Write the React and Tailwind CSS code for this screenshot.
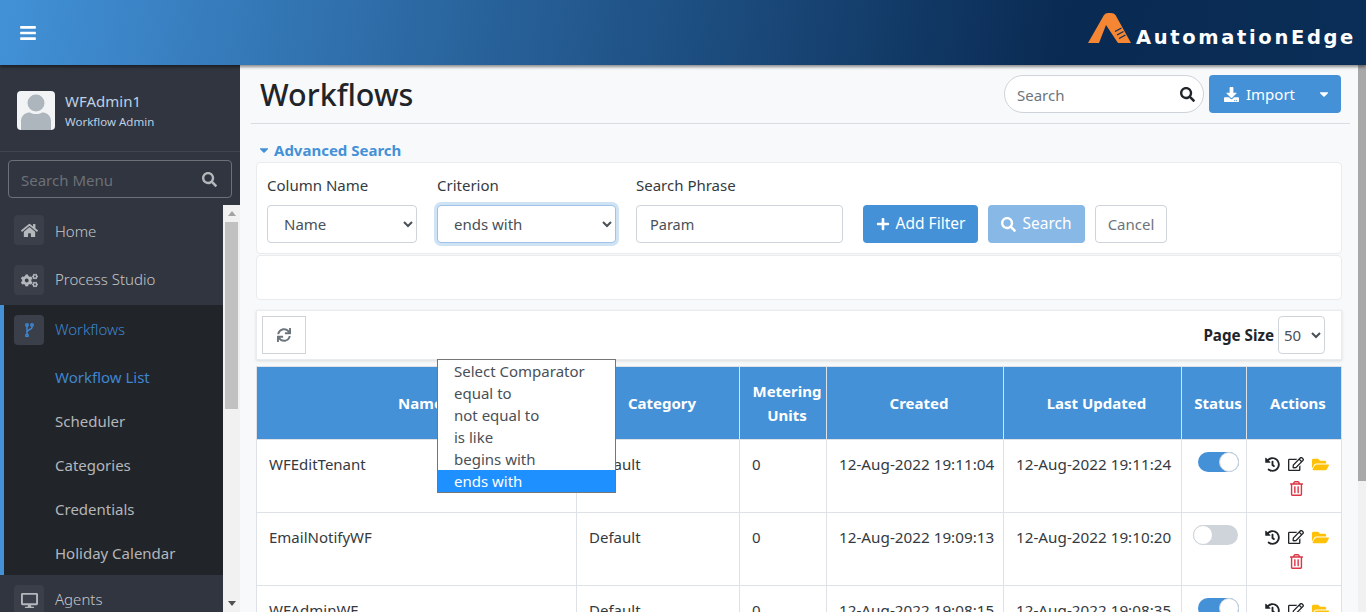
import React from "react";
import {
  FaBars,
  FaCaretDown,
  FaCogs,
  FaDesktop,
  FaDownload,
  FaFolderOpen,
  FaHistory,
  FaHome,
  FaPlus,
  FaRegEdit,
  FaRegTrashAlt,
  FaSearch,
  FaSync,
} from "react-icons/fa";

const subItems = ["Workflow List", "Scheduler", "Categories", "Credentials", "Holiday Calendar"];

const rows = [
  { name: "WFEditTenant", created: "12-Aug-2022 19:11:04", updated: "12-Aug-2022 19:11:24", on: true },
  { name: "EmailNotifyWF", created: "12-Aug-2022 19:09:13", updated: "12-Aug-2022 19:10:20", on: false },
  { name: "WFAdminWF", created: "12-Aug-2022 19:08:15", updated: "12-Aug-2022 19:08:35", on: true },
];

const comparators = ["Select Comparator", "equal to", "not equal to", "is like", "begins with", "ends with"];

const BranchIcon = () => (
  <svg width="9" height="14" viewBox="0 0 9 14" fill="none" stroke="#3f86cf" strokeWidth="1.500">
    <path d="M2 3V12" />
    <path d="M7 3V4.500C7 6.500 2 6.500 2 9" />
    <circle cx="2" cy="2" r="1.200" />
    <circle cx="7" cy="2" r="1.200" />
    <circle cx="2" cy="12.500" r="1.200" />
  </svg>
);

const NavItem = ({ icon: Icon, label, active, labelClass = "pb-[2px]" }) => (
  <div className={`flex h-[50px] items-center gap-[11px] ${active ? "pl-[10px]" : "pl-[14px]"}`}>
    <span className="flex h-[30px] w-[30px] items-center justify-center rounded bg-[#3a3f4a]">
      {active ? <BranchIcon /> : <Icon className="text-[17px] text-[#b4b7bb]" />}
    </span>
    <span className={`${labelClass} text-[15px] font-light ${active ? "text-[#3f86cf]" : "text-[#c4c6c9]"}`}>{label}</span>
  </div>
);

const Sidebar = () => (
  <aside className="flex w-[240px] shrink-0 flex-col bg-[#31353f]">
    <div className="flex h-[87px] items-center gap-[10px] border-b border-[#3f444f] pl-[17px] pt-[5px]">
      <div className="flex h-[39px] w-[38px] items-end justify-center overflow-hidden rounded bg-[#f2f3f4]">
        <svg width="32" height="36" viewBox="0 0 32 36">
          <circle cx="16" cy="9" r="8.500" fill="#adb5bd" />
          <path d="M1 36V27C1 21 6 18.500 10 18.500C13 20.500 19 20.500 22 18.500C26 18.500 31 21 31 27V36Z" fill="#adb5bd" />
        </svg>
      </div>
      <div>
        <div className="text-[15px] leading-[22px] text-[#bcd0e6]">WFAdmin1</div>
        <div className="text-[11.500px] leading-[20px] text-[#bcd0e6]">Workflow Admin</div>
      </div>
    </div>
    <div className="px-2 pt-2">
      <div className="flex h-[38px] items-center justify-between rounded border border-[#6c7077] pl-3 pr-[14px]">
        <span className="pt-[2px] text-[15px] text-[#6c7077]">Search Menu</span>
        <FaSearch className="text-[15px] text-[#b4b7bb]" />
      </div>
    </div>
    <div className="mt-[7px] flex min-h-0 flex-1">
      <nav className="w-[223px] overflow-hidden">
        <NavItem icon={FaHome} label="Home" labelClass="pt-[2px]" />
        <NavItem icon={FaCogs} label="Process Studio" />
        <div className="border-l-4 border-[#4491d7] bg-[#212428]">
          <NavItem label="Workflows" active />
          {subItems.map((item, i) => (
            <div
              key={item}
              className={`flex h-[44px] items-center pl-[51px] text-[15px] ${i === 0 ? "text-[#3f86cf]" : "text-[#b4b7bb]"}`}
            >
              {item}
            </div>
          ))}
        </div>
        <NavItem icon={FaDesktop} label="Agents" />
      </nav>
      <div className="flex w-[17px] flex-col items-center bg-[#f1f1f1]">
        <div className="flex h-[17px] items-center justify-center">
          <div className="h-0 w-0 border-x-[4px] border-b-[5px] border-x-transparent border-b-[#a3a3a3]" />
        </div>
        <div className="h-[187px] w-[13px] bg-[#c1c1c1]" />
        <div className="mt-auto flex h-[17px] items-center justify-center">
          <div className="h-0 w-0 border-x-[4px] border-t-[5px] border-x-transparent border-t-[#505050]" />
        </div>
      </div>
    </div>
  </aside>
);

const Toggle = ({ on }) =>
  on ? (
    <div className="ml-[16px] flex h-[20px] w-[41px] justify-end rounded-full bg-[#4491d7]">
      <div className="h-[20px] w-[20px] rounded-full border border-[#ced4da] bg-white" />
    </div>
  ) : (
    <div className="ml-[11px] flex h-[20px] w-[45px] rounded-full bg-[#ced4da]">
      <div className="h-[20px] w-[20px] rounded-full border border-[#ced4da] bg-white" />
    </div>
  );

const WorkflowTable = () => (
  <table className="w-full table-fixed border-collapse text-[15px] text-[#343a40]">
    <colgroup>
      <col className="w-[320px]" />
      <col className="w-[163px]" />
      <col className="w-[87px]" />
      <col className="w-[177px]" />
      <col className="w-[178px]" />
      <col className="w-[65px]" />
      <col />
    </colgroup>
    <thead>
      <tr className="h-[73px] bg-[#4491d7] text-center text-white">
        {["Name", "Category", "Metering Units", "Created", "Last Updated", "Status", "Actions"].map((h) => (
          <th key={h} className="border border-[#dee2e6] pl-2 font-bold leading-6">
            {h}
          </th>
        ))}
      </tr>
    </thead>
    <tbody className="bg-white">
      {rows.map((r) => (
        <tr key={r.name} className="h-[73px] align-top">
          <td className="border border-[#dee2e6] px-3 py-3 leading-6">{r.name}</td>
          <td className="border border-[#dee2e6] px-3 py-3 leading-6">Default</td>
          <td className="border border-[#dee2e6] px-3 py-3 leading-6">0</td>
          <td className="whitespace-nowrap border border-[#dee2e6] px-3 py-3 text-[15.250px] leading-6">{r.created}</td>
          <td className="whitespace-nowrap border border-[#dee2e6] px-3 py-3 text-[15.250px] leading-6">{r.updated}</td>
          <td className="border border-[#dee2e6] pt-3">
            <Toggle on={r.on} />
          </td>
          <td className="border border-[#dee2e6] py-3">
            <div className="ml-[13px] flex w-[72px] flex-wrap justify-center">
              <span className="flex h-6 w-6 items-center justify-center">
                <FaHistory className="text-[15px] text-[#212529]" />
              </span>
              <span className="flex h-6 w-6 items-center justify-center">
                <FaRegEdit className="text-[16px] text-[#212529]" />
              </span>
              <span className="flex h-6 w-6 items-center justify-center">
                <FaFolderOpen className="text-[17px] text-[#ffc107]" />
              </span>
              <span className="flex h-6 w-6 items-center justify-center">
                <FaRegTrashAlt className="text-[15px] text-[#dc3545]" />
              </span>
            </div>
          </td>
        </tr>
      ))}
    </tbody>
  </table>
);

const App = () => (
  <div className="flex h-[612px] w-[1366px] flex-col overflow-hidden bg-[#f8f9fb] font-['Noto_Sans','Open_Sans',sans-serif] text-[#343a40]">
    <header className="relative z-10 flex h-[65px] shrink-0 items-center justify-between bg-[linear-gradient(100deg,#4291d7,#092a52_78%,#0a2e57)] pl-[19px] pr-[10px] shadow-[0_2px_3px_rgba(0,0,0,0.45)]">
      <FaBars className="text-[18px] text-white" />
      <div className="flex items-end gap-[4px] pb-[10px]">
        <svg width="44" height="31" viewBox="0 0 44 31">
          <path d="M0 31L16 3Q17.500 1 20 1H23Q26 1 27.500 3L43 31H30L18 13L11 31Z" fill="#f58634" />
          <path d="M27 19.500L33.500 16M29 23L35.500 19.500M31 26.500L37.500 23" stroke="#0a2e57" strokeWidth="1.300" />
        </svg>
        <span className="-mb-[7px] font-['DejaVu_Sans',sans-serif] text-[19.500px] font-bold leading-[24px] tracking-[2.650px] text-white">
          AutomationEdge
        </span>
      </div>
    </header>

    <div className="flex min-h-0 flex-1">
      <Sidebar />

      <main className="relative min-w-0 flex-1 overflow-hidden">
        <div className="mx-[8px] ml-[11px] flex h-[59px] items-center justify-between border-b border-[#d9dde2] pl-[9px] pr-[9px]">
          <h1 className="pt-[2px] text-[30.500px] font-medium text-[#212529]">Workflows</h1>
          <div className="flex items-center gap-[5px]">
            <div className="flex h-[38px] w-[200px] items-center justify-between rounded-full border border-[#ced4da] bg-white pl-[12px] pr-[8px]">
              <span className="pt-[2px] text-[15px] text-[#6c757d]">Search</span>
              <FaSearch className="text-[15px] text-[#212529]" />
            </div>
            <button className="flex h-[38px] w-[132px] items-center rounded bg-[#4491d7] pl-[15px] text-[15px] text-white">
              <FaDownload className="mr-[7px] text-[15px]" />
              Import
              <FaCaretDown className="ml-[22px] text-[14px]" />
            </button>
          </div>
        </div>

        <div className="px-[16px]">
          <div className="mt-[16px] flex h-[20px] items-center gap-[3px] pl-[1px] text-[15px] font-bold text-[#4491d7]">
            <FaCaretDown className="text-[14px]" />
            Advanced Search
          </div>

          <div className="mt-[2px] flex h-[92px] items-start rounded-sm border border-[#e9ecef] bg-white pl-[10px] pt-[10px]">
            <div className="w-[170px]">
              <label className="block text-[15px] leading-6">Column Name</label>
              <select className="mt-[8px] h-[38px] w-[150px] rounded border border-[#ced4da] bg-white pl-[12px] text-[15px] text-[#495057]" defaultValue="Name">
                <option>Name</option>
              </select>
            </div>
            <div className="w-[199px]">
              <label className="block text-[15px] leading-6">Criterion</label>
              <select className="mt-[8px] h-[38px] w-[179px] rounded border border-[#9dc3e8] bg-white pl-[12px] text-[15px] text-[#495057] shadow-[0_0_0_3px_rgba(68,145,215,0.25)]" defaultValue="ends with">
                {comparators.map((c) => (
                  <option key={c}>{c}</option>
                ))}
              </select>
            </div>
            <div className="w-[227px]">
              <label className="block text-[15px] leading-6">Search Phrase</label>
              <div className="mt-[8px] flex h-[38px] w-[207px] items-center rounded border border-[#ced4da] bg-white pl-[13px] pt-[2px] text-[14.500px] text-[#495057]">
                Param
              </div>
            </div>
            <div className="mt-[32px] flex gap-[10px]">
              <button className="flex h-[38px] w-[115px] items-center justify-center gap-[6px] rounded bg-[#4491d7] text-[15.500px] text-white">
                <FaPlus className="text-[14px]" />
                Add Filter
              </button>
              <button className="flex h-[38px] w-[97px] items-center justify-center gap-[6px] rounded bg-[#88b8e6] text-[15.500px] text-white">
                <FaSearch className="text-[15px]" />
                Search
              </button>
              <button className="h-[38px] w-[72px] rounded border border-[#ced4da] bg-white text-[15px] text-[#6c757d]">
                Cancel
              </button>
            </div>
          </div>

          <div className="mt-[1px] h-[45px] rounded-sm border border-[#e9ecef] bg-white" />

          <div className="mt-[10px] flex h-[50px] items-center justify-between border border-[#e9ecef] bg-white pl-[5px] pr-[16px] shadow-[0_1px_3px_rgba(0,0,0,0.12)]">
            <button className="flex h-[38px] w-[44px] items-center justify-center border border-[#ced4da]">
              <FaSync className="text-[14px] text-[#6c757d]" />
            </button>
            <div className="flex items-center gap-[4px]">
              <span className="text-[15.200px] font-bold text-[#212529]">Page Size</span>
              <select className="h-[38px] w-[47px] rounded border border-[#ced4da] bg-white pl-[1px] text-[15px] text-[#495057]" defaultValue="50">
                <option>50</option>
              </select>
            </div>
          </div>

          <div className="mt-[6px]">
            <WorkflowTable />
          </div>
        </div>

        {/* open list of the Criterion select */}
        <ul className="absolute left-[197px] top-[294px] w-[179px] border border-[#767676] bg-white text-[15px] leading-[22px] text-[#495057]">
          {comparators.map((c) => (
            <li key={c} className={`pl-[16px] ${c === "ends with" ? "bg-[#1e90ff] text-white" : ""}`}>
              {c}
            </li>
          ))}
        </ul>
      </main>

      <div className="w-[8px] shrink-0 bg-[#f1f1f1]">
        <div className="h-[416px] bg-[#a8a8a8]" />
      </div>
    </div>
  </div>
);

export default App;
